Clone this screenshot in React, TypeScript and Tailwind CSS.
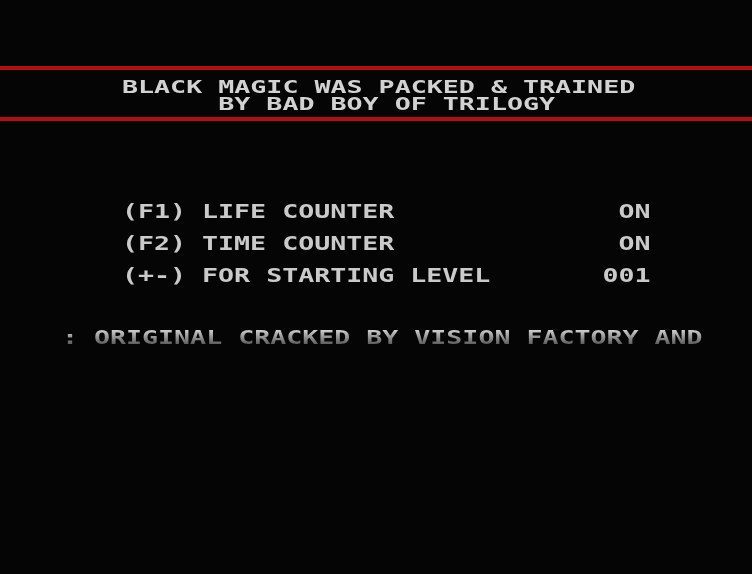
export default function App() {
  const mono = "font-['DejaVu_Sans_Mono','Liberation_Mono',monospace] font-bold uppercase whitespace-pre";

  return (
    <div className="w-[752px] h-[574px] bg-[#050505] overflow-hidden flex flex-col">
      {/* top red bar */}
      <div className="mt-[66px] h-[4px] bg-[#b01010]" />

      {/* header */}
      <div className={`h-[47px] pt-[8px] pl-[122px] text-[18px] leading-[17px] text-[#d2d2d2] ${mono}`}>
        <div className="origin-left scale-x-[1.48]">BLACK MAGIC WAS PACKED &amp; TRAINED</div>
        <div className="origin-left scale-x-[1.48]">{'      BY BAD BOY OF TRILOGY'}</div>
      </div>

      <div className="h-[4px] bg-[#b01010]" />

      {/* trainer options */}
      <div className={`mt-[74px] pl-[122px] text-[19px] leading-[32px] text-[#cacaca] ${mono}`}>
        <div className="origin-left scale-x-[1.4]">{'(F1) LIFE COUNTER              ON'}</div>
        <div className="origin-left scale-x-[1.4]">{'(F2) TIME COUNTER              ON'}</div>
        <div className="origin-left scale-x-[1.4]">{'(+-) FOR STARTING LEVEL       001'}</div>
      </div>

      {/* scroller */}
      <div className={`mt-[39px] pl-[62px] text-[19px] leading-[14px] ${mono}`}>
        <div className="origin-left scale-x-[1.4]">
          <span className="inline-block bg-gradient-to-b from-[#d0d0d0] to-[#5e5e5e] bg-clip-text text-transparent">
            {': ORIGINAL CRACKED BY VISION FACTORY AND'}
          </span>
        </div>
      </div>
    </div>
  );
}
